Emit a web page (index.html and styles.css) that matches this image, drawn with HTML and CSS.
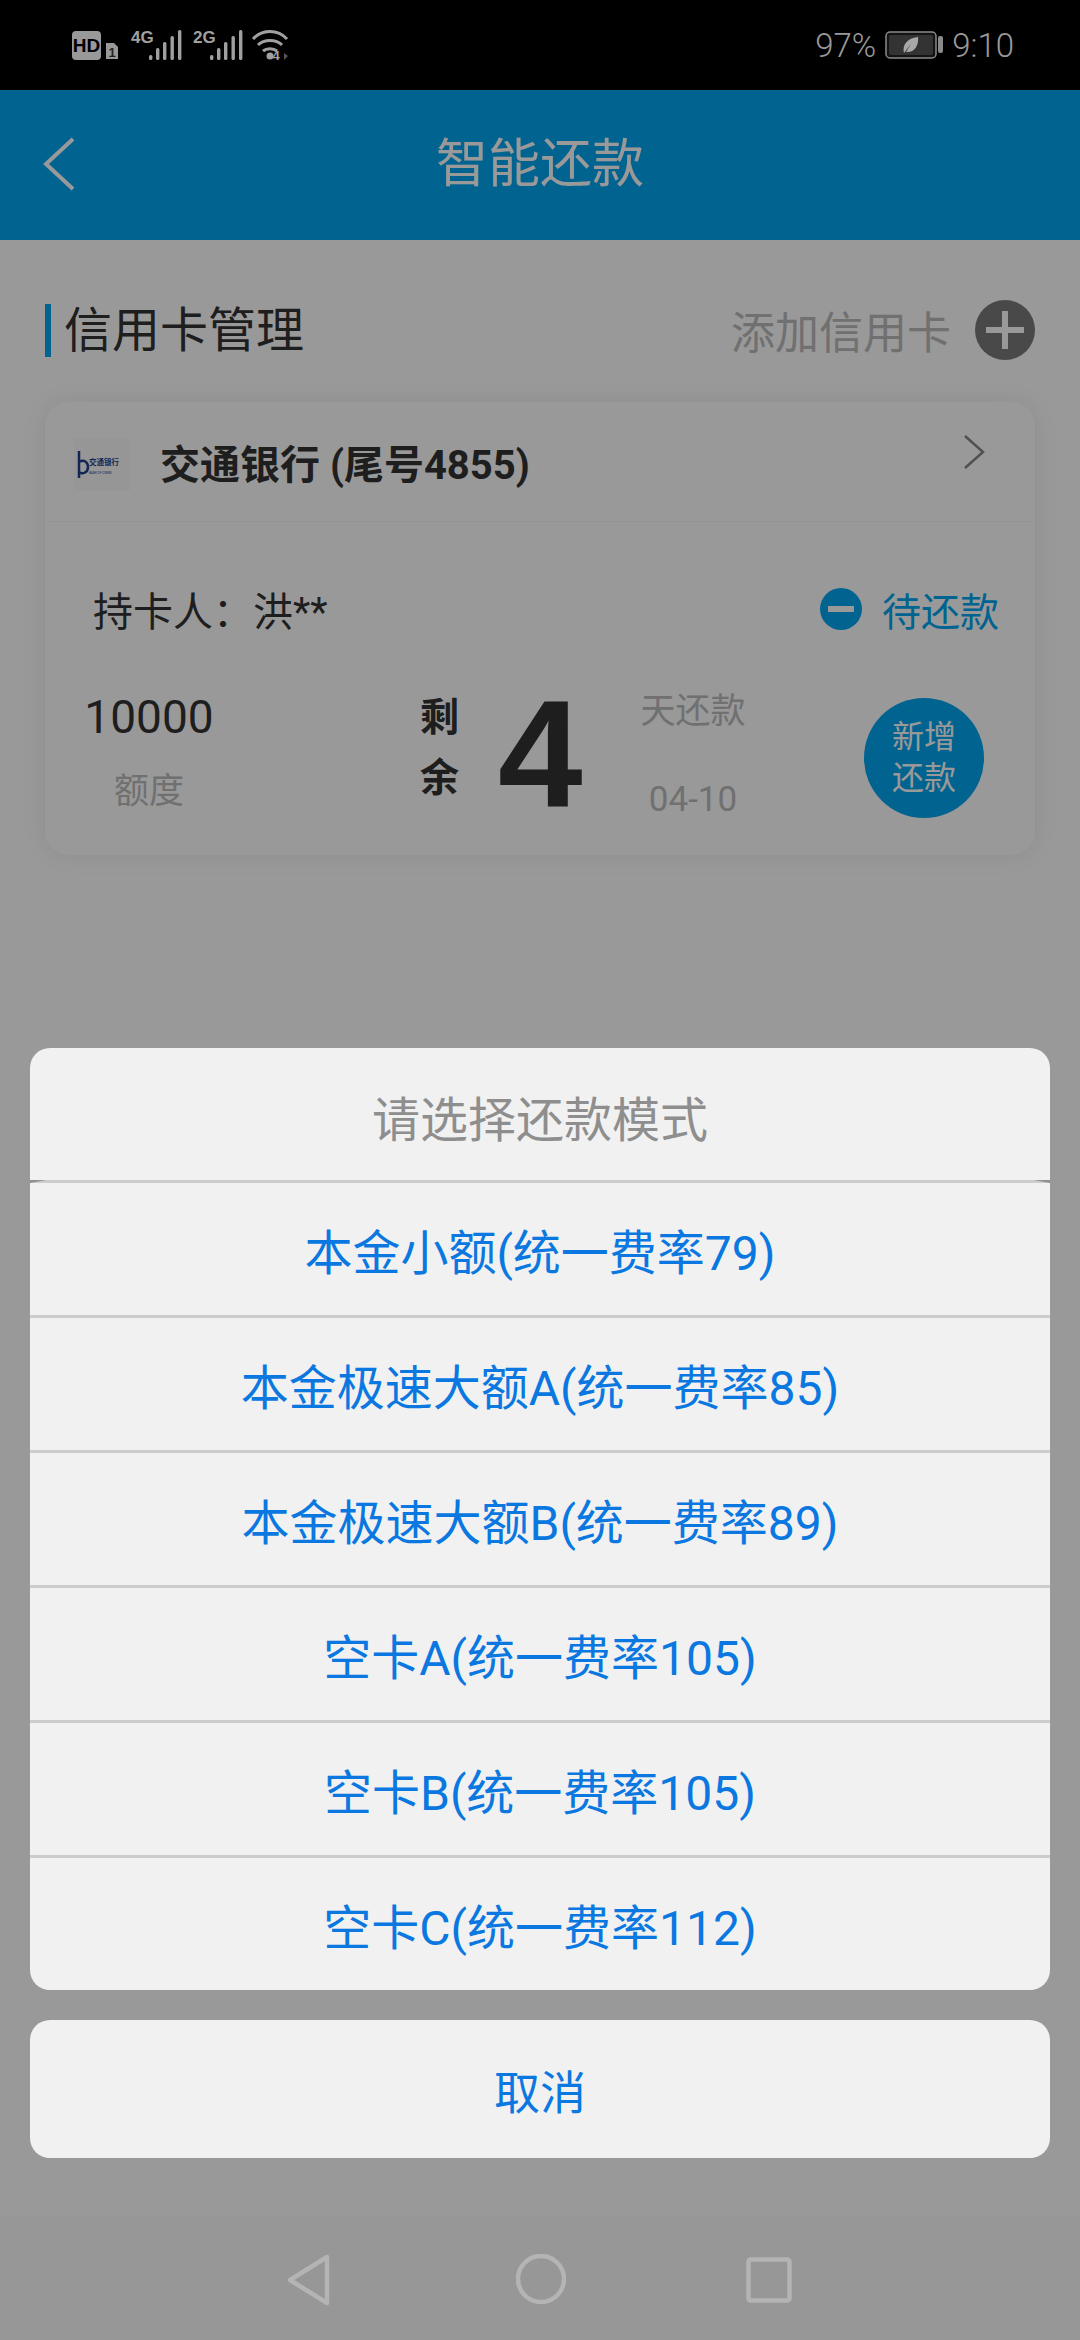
FILE: index.html
```html
<!DOCTYPE html>
<html lang="zh-CN">
<head>
<meta charset="utf-8">
<title>智能还款</title>
<link rel="stylesheet" href="styles.css">
</head>
<body>
<div class="phone">
  <div class="status">
    <svg class="status-left" width="220" height="90" viewBox="72 0 220 90">
      <rect x="72" y="31" width="29" height="29" rx="4" fill="#999"/>
      <text x="86.5" y="52" class="hd">HD</text>
      <path d="M106 43h8l4 4v12h-12z" fill="#999"/>
      <text x="112" y="57" class="sim">1</text>
      <text x="131" y="43" class="net">4G</text>
      <g fill="#a0a0a0">
        <rect x="149" y="55" width="3.4" height="5" rx="1.5"/><rect x="156" y="48" width="3.4" height="12" rx="1.5"/><rect x="163" y="42" width="3.4" height="18" rx="1.5"/><rect x="170.500" y="36" width="3.4" height="24" rx="1.5"/><rect x="178" y="30" width="3.4" height="30" rx="1.5"/>
      </g>
      <text x="193" y="43" class="net">2G</text>
      <g fill="#a0a0a0">
        <rect x="210" y="55" width="3.4" height="5" rx="1.5"/><rect x="217" y="48" width="3.4" height="12" rx="1.5"/><rect x="224" y="42" width="3.4" height="18" rx="1.5"/><rect x="231.500" y="36" width="3.4" height="24" rx="1.5"/><rect x="239" y="30" width="3.4" height="30" rx="1.5"/>
      </g>
      <g fill="none" stroke="#a0a0a0" stroke-width="3">
        <path d="M253 39c9-10 25-10 34 0"/><path d="M258 45c6-6 18-6 24 0"/><path d="M263 51c3.500-3 10.500-3 14 0"/>
      </g>
      <circle cx="270" cy="56" r="3.500" fill="#a0a0a0"/>
      <text x="276" y="60" class="sim">4</text>
      <path d="M284 53l4 3-4 4z" fill="#555"/>
    </svg>
    <div class="status-right">
      <span>97%</span>
      <svg width="58" height="28" viewBox="0 0 58 28">
        <rect x="1" y="1" width="50" height="26" rx="4" fill="#141414" stroke="#8a8a8a" stroke-width="1.500"/>
        <rect x="4" y="4" width="44" height="20" rx="2" fill="#333"/>
        <path d="M19 22c-2-8 3-15 14-16 1 9-4 16-12 15l5-8z" fill="#a8a8a8"/>
        <rect x="53" y="5" width="5" height="17" rx="2" fill="#8a8a8a"/>
      </svg>
      <span>9:10</span>
    </div>
  </div>

  <div class="main">
    <header class="topbar">
      <svg class="back" width="36" height="56" viewBox="0 0 36 56"><path d="M32 3L5 28l27 25" fill="none" stroke="#fff" stroke-width="4"/></svg>
      <h1 class="title">智能还款</h1>
    </header>

    <section class="section-head">
      <h2 class="section-title">信用卡管理</h2>
      <div class="add">
        <span>添加信用卡</span>
        <svg width="60" height="60" viewBox="0 0 60 60"><circle cx="30" cy="30" r="30" fill="#7a7a7a"/><path d="M30 11v38M11 30h38" stroke="#fff" stroke-width="6"/></svg>
      </div>
    </section>

    <article class="card">
      <div class="card-head">
        <svg class="logo" width="56" height="53" viewBox="0 0 56 53">
          <rect width="56" height="53" fill="#fafafa"/>
          <path d="M5 13v27M5 24c5-3 9 0 9 5s-5 8-9 5" fill="none" stroke="#1f3f8f" stroke-width="2.500"/>
          <text x="15" y="27" class="logo-cn">交通银行</text>
          <text x="15" y="36" class="logo-en">BANK OF COMM</text>
        </svg>
        <span class="bank">交通银行 (尾号4855)</span>
        <svg class="chev" width="22" height="34" viewBox="0 0 22 34"><path d="M2 1l18 16L2 33" fill="none" stroke="#888" stroke-width="2.500"/></svg>
      </div>
      <div class="card-body">
        <div class="holder-row">
          <span class="holder">持卡人：洪**</span>
          <div class="pending">
            <svg width="42" height="42" viewBox="0 0 42 42"><circle cx="21" cy="21" r="21" fill="#00a5f0"/><rect x="8" y="18" width="26" height="6" fill="#fff"/></svg>
            <span>待还款</span>
          </div>
        </div>
        <div class="stats">
          <div class="limit">
            <span class="limit-num">10000</span>
            <span class="limit-label">额度</span>
          </div>
          <div class="remain"><span>剩</span><span>余</span></div>
          <span class="days">4</span>
          <div class="due">
            <span>天还款</span>
            <span>04-10</span>
          </div>
          <div class="new-btn">新增<br>还款</div>
        </div>
      </div>
    </article>

    <div class="overlay">
      <div class="sheet">
        <div class="sheet-title">请选择还款模式</div>
        <div class="option first">本金小额(统一费率79)</div>
        <div class="option">本金极速大额A(统一费率85)</div>
        <div class="option">本金极速大额B(统一费率89)</div>
        <div class="option">空卡A(统一费率105)</div>
        <div class="option">空卡B(统一费率105)</div>
        <div class="option">空卡C(统一费率112)</div>
      </div>
      <div class="cancel">取消</div>
    </div>
  </div>

  <nav class="navbar">
    <svg width="46" height="52" viewBox="0 0 46 52"><path d="M40 3L3 26l37 23z" transform="translate(1 0)" fill="none" stroke="#b4b4b4" stroke-width="4.500" stroke-linejoin="round"/></svg>
    <svg width="50" height="50" viewBox="0 0 50 50"><circle cx="25" cy="25" r="23" fill="none" stroke="#b4b4b4" stroke-width="4.500"/></svg>
    <svg width="46" height="46" viewBox="0 0 46 46"><rect x="2.500" y="2.500" width="41" height="41" rx="2" fill="none" stroke="#b4b4b4" stroke-width="4.500"/></svg>
  </nav>
</div>
</body>
</html>
```
FILE: styles.css
```css
* { box-sizing: border-box; margin: 0; padding: 0; }
html, body { width: 1080px; height: 2340px; overflow: hidden; }
body { font-family: Roboto, "Noto Sans CJK SC", sans-serif; background: #fff; }
.phone { width: 1080px; height: 2340px; display: flex; flex-direction: column; }

.status { height: 90px; background: #000; display: flex; align-items: flex-start; justify-content: space-between; padding-right: 66px; padding-left: 72px; flex: none; }
.status-left { display: block; }
.status-right { display: flex; align-items: center; gap: 9px; height: 90px; color: #999; font-size: 33px; font-weight: 300; }
.hd { font: 700 19px "Liberation Sans", sans-serif; fill: #000; text-anchor: middle; }
.sim { font: 700 13px "Liberation Sans", sans-serif; fill: #222; text-anchor: middle; }
.net { font: 700 17px "Liberation Sans", sans-serif; fill: #a0a0a0; }
.status-left text.sim:last-of-type { fill: #a0a0a0; }

.main { position: relative; flex: 1; display: flex; flex-direction: column; background: #fff; }
.topbar { height: 150px; background: #00a5f0; display: flex; align-items: center; justify-content: center; position: relative; flex: none; }
.back { position: absolute; left: 41px; top: 46px; }
.title { font-size: 52px; font-weight: 400; color: #fff; line-height: 1; }

.section-head { display: flex; justify-content: space-between; align-items: center; padding: 60px 45px 0; height: 120px; flex: none; }
.section-title { font-size: 48px; font-weight: 400; color: #333; border-left: 6px solid #00a5f0; padding-left: 13px; line-height: 53px; height: 53px; }
.add { display: flex; align-items: center; gap: 24px; font-size: 44px; color: #bbb; }
.add svg { flex: none; }

.card { margin: 42px 45px 0; height: 453px; background: #fff; border-radius: 24px; box-shadow: 0 0 24px rgba(0, 0, 0, 0.08); flex: none; }
.card-head { height: 120px; display: flex; align-items: center; padding: 0 50px 0 29px; border-bottom: 1px solid #f7f7f7; }
.logo { flex: none; margin-top: 6px; }
.logo-cn { font: 700 7.500px "Noto Sans CJK SC", sans-serif; fill: #1f3f8f; }
.logo-en { font: 400 3px Roboto, sans-serif; fill: #1f3f8f; }
.bank { font-size: 40px; font-weight: 700; color: #333; margin-left: 30px; flex: 1; }
.chev { flex: none; margin-top: -20px; }

.card-body { padding: 66px 36px 0 38px; }
.holder-row { display: flex; justify-content: space-between; align-items: center; height: 42px; padding-left: 10px; }
.holder { font-size: 40px; color: #333; }
.pending { display: flex; align-items: center; gap: 20px; font-size: 39px; color: #00a5f0; }
.pending svg { flex: none; }

.stats { display: flex; align-items: flex-start; height: 120px; margin-top: 68px; }
.limit { width: 132px; display: flex; flex-direction: column; align-items: center; flex: none; }
.limit-num { font-size: 46px; color: #333; line-height: 46px; margin-top: -4px; }
.limit-label { font-size: 35px; color: #bbb; line-height: 40px; margin-top: 32px; }
.remain { margin-left: 205px; display: flex; flex-direction: column; gap: 20px; font-size: 39px; font-weight: 700; color: #333; line-height: 40px; width: 40px; flex: none; }
.days { margin-left: 38px; font-size: 152px; font-weight: 700; color: #333; line-height: 110px; width: 90px; flex: none; font-family: "Liberation Sans", sans-serif; }
.due { margin-left: 52px; width: 106px; display: flex; flex-direction: column; align-items: center; gap: 48px; font-size: 35px; color: #bbb; line-height: 40px; flex: none; margin-top: -6px; }
.new-btn { margin-left: 118px; width: 120px; height: 120px; border-radius: 50%; background: #00a5f0; color: #fff; font-size: 32px; line-height: 41px; display: flex; align-items: center; justify-content: center; text-align: center; flex: none; }

.overlay { position: absolute; inset: 0; background: rgba(0, 0, 0, 0.4); display: flex; flex-direction: column; justify-content: flex-end; gap: 30px; padding: 0 30px 59px; }
.sheet { background: #f1f1f1; border-radius: 20px; }
.sheet-title { height: 132px; display: flex; align-items: center; justify-content: center; font-size: 48px; color: #8e8e8e; padding-top: 4px; }
.option { height: 135px; border-top: 3px solid #ccc; display: flex; align-items: center; justify-content: center; font-size: 48px; color: #0a78e0; }
.option.first { position: relative; }
.option.first::before, .option.first::after { content: ""; position: absolute; top: -3px; width: 16px; height: 3px; background: #8f8f8f; }
.option.first::before { left: 0; clip-path: polygon(0 0, 100% 0, 0 100%); }
.option.first::after { right: 0; clip-path: polygon(0 0, 100% 0, 100% 100%); }
.cancel { height: 138px; background: #f1f1f1; border-radius: 20px; display: flex; align-items: center; justify-content: center; font-size: 46px; color: #0a78e0; }

.navbar { height: 123px; background: #979797; display: flex; align-items: flex-start; flex: none; padding: 37px 0 0 286px; gap: 0; }
.navbar svg:nth-child(2) { margin-left: 184px; }
.navbar svg:nth-child(3) { margin-left: 180px; margin-top: 3px; }
```
